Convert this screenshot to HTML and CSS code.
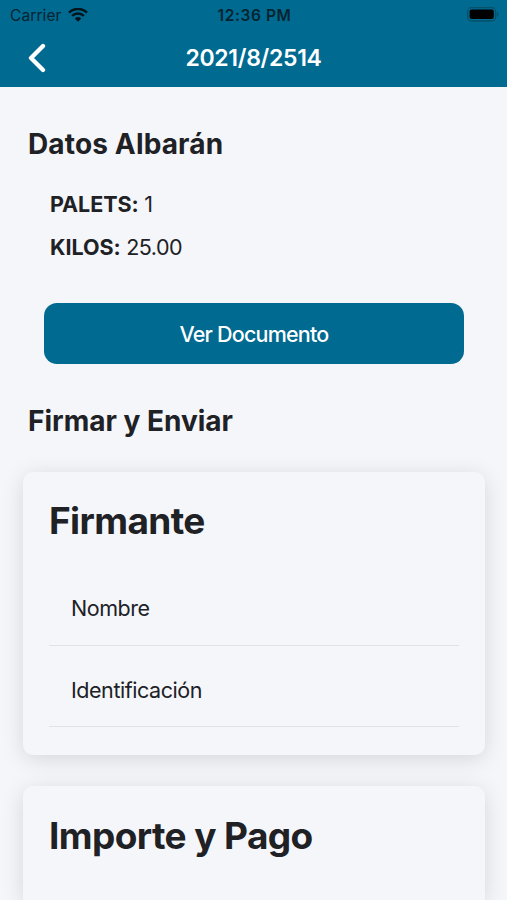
FILE: index.html
```html
<!DOCTYPE html>
<html lang="es">
<head>
<meta charset="utf-8">
<title>2021/8/2514</title>
<link rel="stylesheet" href="styles.css">
</head>
<body>
<header class="header">
  <div class="status">
    <div class="carrier"><span class="carrier-name">Carrier</span>
      <svg class="wifi" width="20" height="14" viewBox="0 0 20 14"><path d="M1 4.6a13 13 0 0 1 18 0" /><path d="M4.1 7.8a8.4 8.4 0 0 1 11.8 0"/><path class="dot" d="M6.8 10.4a4.6 4.6 0 0 1 6.4 0L10 13.7z"/></svg>
    </div>
    <span class="clock">12:36 PM</span>
    <svg class="battery" width="32" height="15" viewBox="0 0 32 15"><rect class="shell" x=".7" y=".7" width="28" height="13.3" rx="4"/><rect x="2.6" y="2.6" width="24.2" height="9.5" rx="2"/><path class="tip" d="M30 5v4.8q1.5-.8 1.5-2.4T30 5z"/></svg>
  </div>
  <div class="nav">
    <svg class="back" width="20" height="30" viewBox="0 0 20 30"><path d="M16 3 4 15l12 12"/></svg>
    <h1 class="title">2021/8/2514</h1>
  </div>
</header>
<main>
  <h2 class="section">Datos Albarán</h2>
  <div class="facts">
    <p><b>PALETS:</b> <span>1</span></p>
    <p><b>KILOS:</b> <span>25.00</span></p>
  </div>
  <button class="button">Ver Documento</button>
  <h2 class="section second">Firmar y Enviar</h2>
  <section class="card">
    <h3>Firmante</h3>
    <div class="fields">
      <div class="field">Nombre</div>
      <div class="field">Identificación</div>
    </div>
  </section>
  <section class="card payment">
    <h3>Importe y Pago</h3>
  </section>
</main>
</body>
</html>
```
FILE: styles.css
```css
* { box-sizing: border-box; }
body { margin: 0; height: 900px; overflow: hidden; background: #f5f6fa; color: #202125; font-family: Inter, "Liberation Sans", sans-serif; }
h1, h2, h3, p { margin: 0; }
.header { height: 87px; background: #006a90; }
.status { height: 29px; padding: 0 8px 0 10px; display: grid; grid-template-columns: 1fr auto 1fr; align-items: center; color: #062431; }
.carrier { display: flex; align-items: center; gap: 6px; font-size: 15.5px; letter-spacing: .1px; }
.wifi { fill: none; stroke: #03141c; stroke-width: 2.5; }
.wifi .dot { fill: #03141c; stroke: none; }
.clock { font-size: 15.5px; font-weight: 600; letter-spacing: .6px; padding-top: 1px; }
.carrier-name { padding-top: 1px; }
.battery { justify-self: end; fill: #000; }
.battery .shell { fill: none; stroke: #05506b; stroke-width: 1.3; }
.battery .tip { fill: #05506b; }
.nav { height: 57px; padding: 0 27px; display: grid; grid-template-columns: 1fr auto 1fr; align-items: center; }
.back { fill: none; stroke: #fff; stroke-width: 4.3; stroke-linecap: round; stroke-linejoin: round; }
.title { color: #fff; font-size: 23px; line-height: 28px; font-weight: 600; letter-spacing: -.3px; }
main { padding: 39px 22px 0; }
.section { margin-left: 6px; font-size: 28px; line-height: 36px; font-weight: 650; letter-spacing: .15px; }
.facts { margin: 21px 0 0 28px; font-size: 21.5px; line-height: 43px; letter-spacing: -.5px; }
.facts b { font-weight: 650; letter-spacing: -.05px; }
.button { display: block; width: 420px; height: 61px; margin: 34px 0 0 22px; padding: 0; border: 0; border-radius: 13px; background: #006a90; color: #fff; font: 450 21.5px Inter, sans-serif; letter-spacing: -.8px; }
.second { margin-top: 39px; letter-spacing: 0; }
.card { height: 283px; margin: 33px 0 0 1px; padding: 25px 26px; border-radius: 10px; background: #f5f6fa; box-shadow: 0 4px 22px rgba(0,0,0,.13); }
.card h3 { font-size: 37px; line-height: 48px; font-weight: 700; letter-spacing: -.6px; }
.fields { margin-top: 19px; }
.field { height: 82px; padding: 26px 22px 0; border-bottom: 1px solid #e1e2e6; font-size: 21.5px; line-height: 36px; letter-spacing: -.45px; }
.field + .field { height: 81px; }
.payment { height: 114px; margin-top: 31px; padding-top: 26px; border-radius: 10px 10px 0 0; }
```
